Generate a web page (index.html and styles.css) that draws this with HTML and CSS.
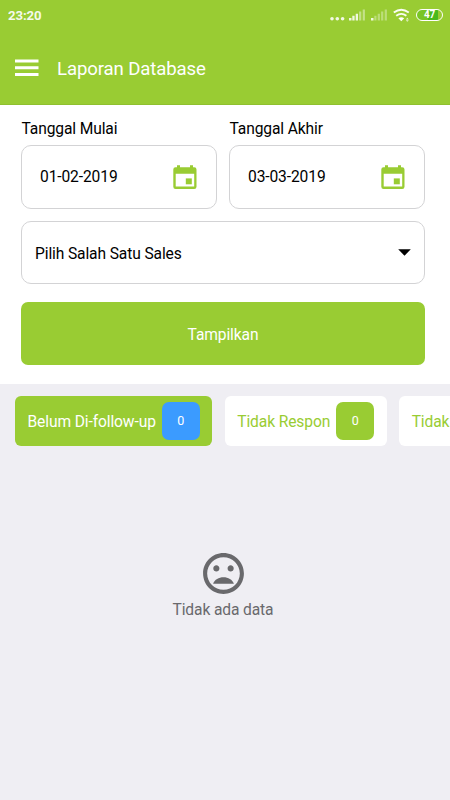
FILE: index.html
```html
<!DOCTYPE html>
<html lang="id">
<head>
<meta charset="utf-8">
<title>Laporan Database</title>
<link rel="stylesheet" href="styles.css">
</head>
<body>
<header class="header">
  <div class="status">
    <span class="clock">23:20</span>
    <div class="indicators">
      <svg width="86" height="24" viewBox="0 0 86 24" fill="#fff">
        <g opacity=".88"><circle cx="5" cy="18.7" r="1.8"/><circle cx="10.300" cy="18.7" r="1.8"/><circle cx="15.600" cy="18.7" r="1.8"/></g>
        <g opacity=".85"><path d="M22 18h2.500v2.500H22zM25.300 15.800h2.300v4.700h-2.300zM28.700 13.700H31v6.800h-2.300z"/><path opacity=".5" d="M32.100 11.600h2.200v8.900h-2.200zM35.700 9.500h2.200v11h-2.200z"/></g>
        <path opacity=".85" d="M44 18h2.500v2.500H44z"/><path opacity=".35" d="M47.300 15.800h2.200v4.700h-2.200zM50.700 13.700h2.200v6.800h-2.200zM54.100 11.600h2.200v8.900h-2.200zM57.700 9.500h2.200v11h-2.200z"/>
        <g fill="none" stroke="#fff" stroke-width="1.900" opacity=".95"><path d="M66.800 12.500q7.500-5.600 15 0M69.200 15.800q5.100-3.800 10.200 0"/></g>
        <path d="M71.400 18.200q2.900-2 5.800 0l-2.900 3z"/><path d="M80.300 17.800l1.500 1.700h-3zM78.800 20.200h3l-1.500 1.600z" opacity=".8"/>
      </svg>
      <span class="battery">47</span>
    </div>
  </div>
  <div class="toolbar">
    <svg class="menu" width="24" height="18" viewBox="0 0 24 18" fill="#fff"><path d="M0 .5h23.5v3H0zM0 7.200h23.5v3H0zM0 14h23.5v3H0z"/></svg>
    <h1>Laporan Database</h1>
  </div>
</header>
<main>
  <section class="filters">
    <div class="dates">
      <div class="field">
        <label>Tanggal Mulai</label>
        <div class="box date"><span>01-02-2019</span>
          <svg width="24" height="25" viewBox="0 0 24 25" fill="#9c3"><path fill-rule="evenodd" d="M2.5 2.2H4V.3h3v1.9h10V.3h3v1.9h1.2q2.3 0 2.3 2.3v17.3q0 2.3-2.3 2.3H2.5Q.3 24.1.3 21.8V4.500q0-2.300 2.200-2.300zM2.700 8.700v12.900h18.500V8.700z"/><path d="M12.800 13.400h6v5.900h-6z"/></svg>
        </div>
      </div>
      <div class="field">
        <label>Tanggal Akhir</label>
        <div class="box date"><span>03-03-2019</span>
          <svg width="24" height="25" viewBox="0 0 24 25" fill="#9c3"><path fill-rule="evenodd" d="M2.5 2.2H4V.3h3v1.9h10V.3h3v1.9h1.2q2.3 0 2.3 2.3v17.3q0 2.3-2.3 2.3H2.5Q.3 24.1.3 21.8V4.500q0-2.300 2.200-2.300zM2.700 8.700v12.900h18.500V8.700z"/><path d="M12.800 13.400h6v5.900h-6z"/></svg>
        </div>
      </div>
    </div>
    <div class="box select"><span>Pilih Salah Satu Sales</span>
      <svg width="13" height="7" viewBox="0 0 13 7"><path d="M.2.2h12.600L6.500 6.700z"/></svg>
    </div>
    <button class="submit">Tampilkan</button>
  </section>
  <nav class="tabs">
    <div class="tab active"><span>Belum Di-follow-up</span><b>0</b></div>
    <div class="tab"><span>Tidak Respon</span><b>0</b></div>
    <div class="tab next"><span>Tidak</span></div>
  </nav>
  <section class="empty">
    <svg width="49" height="49" viewBox="0 0 24 24" fill="#69696c"><path d="M11.990 2C6.470 2 2 6.480 2 12s4.470 10 9.990 10C17.520 22 22 17.520 22 12S17.520 2 11.990 2zM12 20c-4.420 0-8-3.580-8-8s3.580-8 8-8 8 3.580 8 8-3.580 8-8 8zm3.500-9c.830 0 1.500-.670 1.500-1.500S16.330 8 15.500 8 14 8.670 14 9.500s.670 1.500 1.500 1.500zm-7 0c.830 0 1.500-.670 1.500-1.500S9.330 8 8.500 8 7 8.670 7 9.500 7.670 11 8.500 11zm3.500 2.800c-2.330 0-4.310 1.100-5.110 3.200h10.220c-.8-2.100-2.780-3.200-5.110-3.200z"/></svg>
    <p>Tidak ada data</p>
  </section>
</main>
</body>
</html>
```
FILE: styles.css
```css
* { box-sizing: border-box; }
body {
  margin: 0;
  height: 800px;
  overflow: hidden;
  background: #efeef3;
  color: #000;
  font: 15.6px/20px Roboto, sans-serif;
  letter-spacing: -.12px;
}
svg { display: block; flex: none; }
.header {
  height: 105px;
  background: #9c3;
  border-bottom: 1px solid #8fc02f;
  color: #fff;
}
.status {
  display: flex;
  justify-content: space-between;
  height: 31px;
  padding: 0 7px 0 8px;
}
.clock { font-size: 13.200px; font-weight: 700; line-height: 31px; opacity: .9; }
.indicators { display: flex; gap: 3px; }
.battery {
  width: 27px;
  height: 12px;
  margin-top: 9px;
  border: 1.500px solid #fff;
  border-radius: 6px;
  background: linear-gradient(90deg, #79c525 0 45%, #49b91c 45% 85%, #9c3 85%);
  font-size: 10px;
  font-weight: 700;
  line-height: 10px;
  text-align: center;
}
.toolbar {
  display: flex;
  align-items: center;
  height: 74px;
  padding: 0 15px;
  gap: 18px;
}
.menu { margin-top: -1px; }
h1 { margin: 1px 0 0; font-size: 18.600px; font-weight: 400; line-height: 24px; }
.filters {
  height: 279px;
  padding: 14px 25px 0 21px;
  background: #fff;
}
.dates { display: flex; gap: 12px; }
.field { flex: 1; }
.field label { display: block; height: 26px; padding-left: .500px; }
.box {
  display: flex;
  align-items: center;
  justify-content: space-between;
  border: 1.500px solid #d3d3d5;
  border-radius: 10px;
}
.date { height: 64px; padding: 0 19px 0 18px; }
.select { height: 63px; margin-top: 12px; padding: 0 13px; }
.select span { padding-top: 2px; }
.submit {
  display: block;
  width: 100%;
  height: 63px;
  margin-top: 18px;
  padding: 2px 0 0;
  border: 0;
  border-radius: 7px;
  background: #9c3;
  color: #fff;
  font: inherit;
  letter-spacing: inherit;
}
.tabs {
  display: flex;
  gap: 12.500px;
  padding: 12px 0 0 15px;
  overflow: hidden;
}
.tab {
  display: flex;
  flex: none;
  align-items: center;
  gap: 6px;
  height: 50px;
  padding: 0 12.500px;
  border-radius: 6px;
  background: #fff;
  color: #9c3;
}
.tab span { padding-top: 2px; }
.next { width: 150px; }
.tab b {
  width: 38px;
  height: 38px;
  border-radius: 7px;
  background: #9c3;
  color: #fff;
  font-size: 12.500px;
  font-weight: 400;
  line-height: 38px;
  text-align: center;
}
.active { background: #9c3; color: #fff; }
.active b { background: #3b9bff; }
.empty {
  display: flex;
  flex-direction: column;
  align-items: center;
  padding-top: 103px;
  padding-right: 4px;
  color: #69696c;
}
.empty p { margin: 2px 0 0; }
```
